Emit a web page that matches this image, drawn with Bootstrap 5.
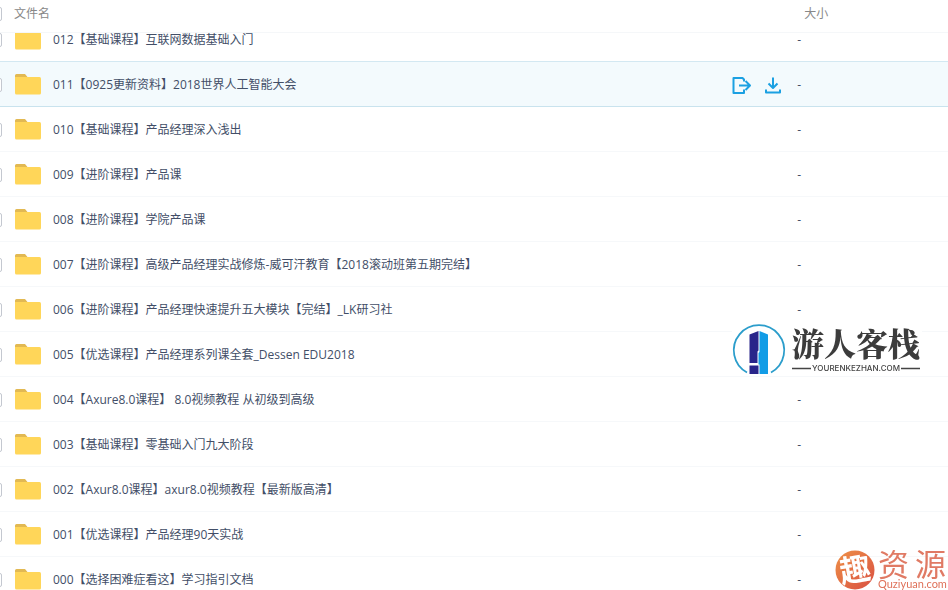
<!DOCTYPE html>
<html lang="zh-CN">
<head>
<meta charset="utf-8">
<meta name="viewport" content="width=device-width, initial-scale=1">
<title>文件列表</title>
<link href="https://cdn.jsdelivr.net/npm/bootstrap@5.3.0/dist/css/bootstrap.min.css" rel="stylesheet">
<style>
body { font: 12px/18px "Open Sans", "Noto Sans CJK SC", sans-serif; color: #424e67; background: #fff; }
.file-scroll { scrollbar-width: none; }
.file-scroll::-webkit-scrollbar { display: none; }
.file-table { table-layout: fixed; border-collapse: separate; border-spacing: 0; }
.file-table th { height: 33px; padding: 0 0 4px; font-weight: 400; color: #888; background: #fff; border-bottom: 1px solid #f5f7f9; }
.file-table td { height: 45px; padding: 2px 0 0; border-bottom: 1px solid #f6f8fa; }
.file-table tr.before-active td { border-bottom-color: #d3e8f2; }
.file-table tr.active-row td { background: #f3fafd; border-bottom-color: #c9e3ee; }
.col-check { width: 14px; }
.col-size { width: 16%; }
.file-table .form-check-input { display: block; width: 14px; height: 14px; margin: 0 0 0 -12px; border-color: #c4c8d0; border-radius: 2px; }
.folder { width: 27px; height: 24px; flex: none; }
.file-name { color: #424e67; text-decoration: none; }
.action { width: 20px; height: 20px; color: #1ba0e2; }
.file-table .size-head { padding-left: 8px; }
.file-table .size-cell { padding-left: 1px; }
.mark-inn { left: 732px; top: 322px; background: #fff; }
.mark-qu { left: 834px; top: 546px; }
.mark-inn svg, .mark-qu svg { overflow: visible; }
</style>
<script src="https://cdn.jsdelivr.net/npm/bootstrap@5.3.0/dist/js/bootstrap.bundle.min.js"></script>
</head>
<body>
<svg class="d-none">
  <symbol id="folder" viewBox="0 0 27 24">
    <path d="M1 2.500a1.500 1.500 0 0 1 1.500-1.500H11l2.500 3V12H1z" fill="#e2b953"/>
    <path d="M1 4h24.500A1.500 1.500 0 0 1 27 5.500V20a1.500 1.500 0 0 1-1.500 1.500h-23A1.500 1.500 0 0 1 1 20z" fill="#ffd659"/>
  </symbol>
</svg>
<main class="file-scroll vh-100 overflow-auto" id="fileScroll">
  <table class="file-table w-100">
    <colgroup><col class="col-check"><col><col class="col-size"></colgroup>
    <thead class="sticky-top">
      <tr>
        <th scope="col"><input class="form-check-input" type="checkbox" aria-label="全选"></th>
        <th scope="col">文件名</th>
        <th scope="col" class="size-head">大小</th>
      </tr>
    </thead>
    <tbody id="fileRows"></tbody>
  </table>
</main>

<div class="mark-inn position-fixed pe-none">
  <svg class="d-block" width="190" height="54" viewBox="0 0 190 54" role="img" aria-label="游人客栈">
    <path d="M15 50.500A25.200 25.200 0 1 1 39 50.500" fill="none" stroke="#2b9dcb" stroke-width="1.800"/>
    <path d="M17.500 12.500l9-3.500v19.500l-1 1V41h-8z" fill="#29258a"/>
    <path d="M17.500 43.500h9V52h-9z" fill="#29258a"/>
    <path d="M27.500 9l8.500 3.500V52h-8.500V42.500h-1V31l1-1z" fill="#129ce6"/>
    <text x="60" y="34" font-size="32" font-weight="900" font-family="'Noto Serif CJK SC','Noto Sans CJK SC',serif" fill="#3c3c3c">游人客栈</text>
    <path d="M60 46.500h19M169 46.500h19" stroke="#444" stroke-width="1.500"/>
    <text x="124" y="49" text-anchor="middle" font-size="8" font-weight="500" font-family="Inter,sans-serif" fill="#444">YOURENKEZHAN.COM</text>
  </svg>
</div>
<div class="mark-qu position-fixed pe-none">
  <svg class="d-block" width="114" height="44" viewBox="0 0 114 44" role="img" aria-label="趣资源">
    <defs><linearGradient id="warm" x1="0" y1="0" x2="1" y2="1"><stop offset="0" stop-color="#ee9147"/><stop offset="1" stop-color="#d94f42"/></linearGradient></defs>
    <circle cx="21" cy="24" r="19.500" fill="url(#warm)"/>
    <text x="21" y="35" text-anchor="middle" font-size="31" font-weight="700" font-family="'Noto Sans CJK SC',sans-serif" fill="#fff" transform="rotate(-10 21 24)">趣</text>
    <text x="44" y="30" font-size="31" font-family="'Noto Sans CJK SC',sans-serif" fill="#e07a64">资</text>
    <text x="81" y="30" font-size="31" font-family="'Noto Sans CJK SC',sans-serif" fill="#e07a64">源</text>
    <text x="44" y="42" font-size="11" font-family="Lato,sans-serif" fill="#df7159">Quziyuan.com</text>
  </svg>
</div>

<script>
const files = [
  "012【基础课程】互联网数据基础入门",
  "011【0925更新资料】2018世界人工智能大会",
  "010【基础课程】产品经理深入浅出",
  "009【进阶课程】产品课",
  "008【进阶课程】学院产品课",
  "007【进阶课程】高级产品经理实战修炼-威可汗教育【2018滚动班第五期完结】",
  "006【进阶课程】产品经理快速提升五大模块【完结】_LK研习社",
  "005【优选课程】产品经理系列课全套_Dessen EDU2018",
  "004【Axure8.0课程】 8.0视频教程 从初级到高级",
  "003【基础课程】零基础入门九大阶段",
  "002【Axur8.0课程】axur8.0视频教程【最新版高清】",
  "001【优选课程】产品经理90天实战",
  "000【选择困难症看这】学习指引文档"
];
const noSize = 7;
const actions = `
  <div class="d-flex gap-2 ms-auto me-2 pe-1">
    <button type="button" class="btn border-0 p-0 me-1 action" aria-label="分享"><svg class="d-block" width="20" height="20" viewBox="0 0 20 20" fill="none" stroke="currentColor" stroke-width="2"><path d="M12 6.500V4.500L10.500 3H1.500v15H12v-3.500M7 10.500H17.500M13.500 6l4.500 4.500-4.500 4.500" stroke-linejoin="round"/></svg></button>
    <button type="button" class="btn border-0 p-0 action" aria-label="下载"><svg class="d-block" width="20" height="20" viewBox="0 0 20 20" fill="none" stroke="currentColor" stroke-width="2"><path d="M9 2.500v11M4.500 8.500L9 13l4.500-4.500M2 14.500v3h14v-3" stroke-linejoin="round"/></svg></button>
  </div>`;
document.getElementById("fileRows").innerHTML = files.map((name, i) => `
  <tr class="${i === 0 ? "before-active" : i === 1 ? "active-row" : ""}">
    <td><input class="form-check-input" type="checkbox" aria-label="${name}"></td>
    <td><div class="d-flex align-items-center">
      <svg class="folder me-2" aria-hidden="true"><use href="#folder"/></svg>
      <a href="#" class="file-name text-nowrap ms-1">${name}</a>${i === 1 ? actions : ""}
    </div></td>
    <td class="size-cell">${i === noSize ? "" : "-"}</td>
  </tr>`).join("");
document.getElementById("fileScroll").scrollTop = 16;
</script>
</body>
</html>
